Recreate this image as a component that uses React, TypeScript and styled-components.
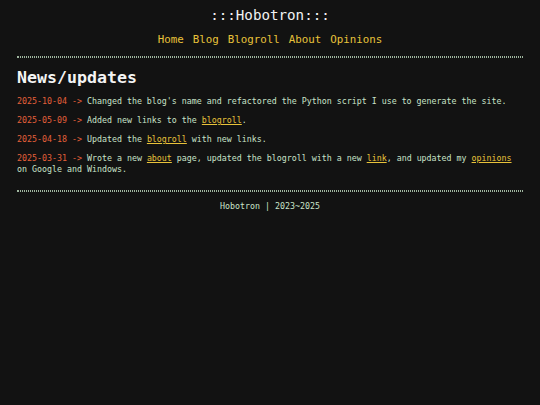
import React from "react";
import styled, { createGlobalStyle } from "styled-components";

const Global = createGlobalStyle`
  html, body { margin: 0; padding: 0; background: #121212; }
  body { font-family: "DejaVu Sans Mono", "Liberation Mono", monospace; }
`;

const Page = styled.div`
  width: 506px;
  margin: 0 auto;
  padding-top: 6px;
`;

const Header = styled.header`
  display: flex;
  flex-direction: column;
  align-items: center;
  gap: 9px;
  padding-bottom: 9px;
`;

const Title = styled.h1`
  margin: 0;
  font-size: 14.2px;
  line-height: 18px;
  font-weight: normal;
  color: #f2f2f2;
`;

const Nav = styled.nav`
  display: flex;
  gap: 9px;
  font-size: 10.8px;
  line-height: 14px;
`;

const NavLink = styled.a`
  color: #e8c23a;
  text-decoration: none;
`;

const Rule = styled.hr`
  margin: 0;
  border: none;
  border-top: 1px dotted #9fb59f;
  border-bottom: 1px dotted #9fb59f;
  height: 0;
`;

const Main = styled.main`
  padding: 10px 0 15px;
`;

const Heading = styled.h2`
  margin: 0 0 8px;
  font-size: 16.6px;
  line-height: 20px;
  font-weight: bold;
  color: #f4f4f4;
`;

const Entry = styled.p`
  margin: 0 0 8px;
  font-size: 8.3px;
  line-height: 11px;
  color: #c9e2c9;
  &:last-child { margin-bottom: 0; }
`;

const Date = styled.span`
  color: #e4603a;
`;

const TextLink = styled.a`
  color: #e8c23a;
  text-decoration: underline;
`;

const Footer = styled.footer`
  padding-top: 9px;
  text-align: center;
  font-size: 8.3px;
  line-height: 11.5px;
  color: #c9e2c9;
`;

export default function App() {
  return (
    <>
      <Global />
      <Page>
        <Header>
          <Title>:::Hobotron:::</Title>
          <Nav>
            <NavLink href="#">Home</NavLink>
            <NavLink href="#">Blog</NavLink>
            <NavLink href="#">Blogroll</NavLink>
            <NavLink href="#">About</NavLink>
            <NavLink href="#">Opinions</NavLink>
          </Nav>
        </Header>
        <Rule />
        <Main>
          <Heading>News/updates</Heading>
          <Entry>
            <Date>2025-10-04 -&gt;</Date> Changed the blog's name and refactored the Python script I use to generate the site.
          </Entry>
          <Entry>
            <Date>2025-05-09 -&gt;</Date> Added new links to the <TextLink href="#">blogroll</TextLink>.
          </Entry>
          <Entry>
            <Date>2025-04-18 -&gt;</Date> Updated the <TextLink href="#">blogroll</TextLink> with new links.
          </Entry>
          <Entry>
            <Date>2025-03-31 -&gt;</Date> Wrote a new <TextLink href="#">about</TextLink> page, updated the blogroll with a new <TextLink href="#">link</TextLink>, and updated my <TextLink href="#">opinions</TextLink> on Google and Windows.
          </Entry>
        </Main>
        <Rule />
        <Footer>Hobotron | 2023~2025</Footer>
      </Page>
    </>
  );
}
